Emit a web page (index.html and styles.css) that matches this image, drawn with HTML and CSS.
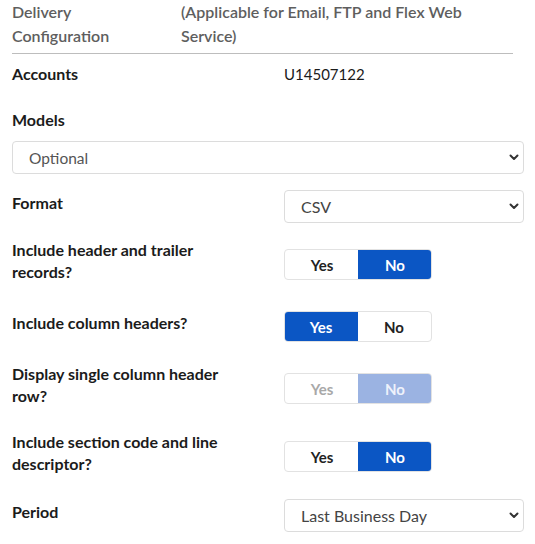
FILE: index.html
```html
<!DOCTYPE html>
<html>
<head>
<meta charset="utf-8">
<link rel="stylesheet" href="styles.css">
</head>
<body>
<div class="page">
  <div class="head">
    <div class="head-title">Delivery<br>Configuration</div>
    <div class="head-note">(Applicable for Email, FTP and Flex Web Service)</div>
  </div>

  <div class="row accounts">
    <div class="label">Accounts</div>
    <div class="value">U14507122</div>
  </div>

  <div class="models">
    <div class="label">Models</div>
    <div class="select full">
      <span class="placeholder">Optional</span>
      <svg class="chev" width="10" height="7" viewBox="0 0 10 7"><path d="M1.5 1.5 L5 5 L8.5 1.5" fill="none" stroke="#333" stroke-width="2" stroke-linecap="round" stroke-linejoin="round"/></svg>
    </div>
  </div>

  <div class="row ctl format">
    <div class="label">Format</div>
    <div class="select">
      <span>CSV</span>
      <svg class="chev" width="10" height="7" viewBox="0 0 10 7"><path d="M1.5 1.5 L5 5 L8.5 1.5" fill="none" stroke="#333" stroke-width="2" stroke-linecap="round" stroke-linejoin="round"/></svg>
    </div>
  </div>

  <div class="row ctl r1">
    <div class="label">Include header and trailer<br>records?</div>
    <div class="toggle"><span class="opt">Yes</span><span class="opt on">No</span></div>
  </div>

  <div class="row ctl r2">
    <div class="label">Include column headers?</div>
    <div class="toggle"><span class="opt on">Yes</span><span class="opt">No</span></div>
  </div>

  <div class="row ctl r3">
    <div class="label">Display single column header<br>row?</div>
    <div class="toggle disabled"><span class="opt">Yes</span><span class="opt on">No</span></div>
  </div>

  <div class="row ctl r4">
    <div class="label">Include section code and line<br>descriptor?</div>
    <div class="toggle"><span class="opt">Yes</span><span class="opt on">No</span></div>
  </div>

  <div class="row ctl period">
    <div class="label">Period</div>
    <div class="select">
      <span>Last Business Day</span>
      <svg class="chev" width="10" height="7" viewBox="0 0 10 7"><path d="M1.5 1.5 L5 5 L8.5 1.5" fill="none" stroke="#333" stroke-width="2" stroke-linecap="round" stroke-linejoin="round"/></svg>
    </div>
  </div>
</div>
</body>
</html>
```

FILE: styles.css
```css
html, body {
  margin: 0;
  padding: 0;
  background: #fff;
}
body {
  font-family: Lato, "Open Sans", Arial, sans-serif;
  font-size: 16px;
  color: #1b1b1b;
}
.page {
  width: 512px;
  padding: 0 11px 0 12px;
}
.head {
  display: grid;
  grid-template-columns: 169px 1fr;
  line-height: 24px;
  color: #5e5e5e;
  font-weight: 600;
  padding-bottom: 5px;
  border-bottom: 1px solid #bdbdbd;
  margin-right: 11px;
}
.head-note {
  padding-right: 50px;
}
.row {
  display: grid;
  grid-template-columns: 272px 240px;
}
.label {
  font-weight: 700;
  line-height: 22px;
}
.accounts {
  margin-top: 9px;
  line-height: 22px;
}
.value {
  font-weight: 400;
  font-size: 15px;
}
.models {
  margin-top: 24px;
}
.models .select {
  margin-top: 10px;
}
.ctl {
  align-items: center;
}
.ctl .label {
  padding-bottom: 7px;
}
.select {
  box-sizing: border-box;
  height: 33px;
  border: 1px solid #dcdcdc;
  border-radius: 4px;
  display: flex;
  align-items: center;
  justify-content: space-between;
  padding: 0 4px 0 16px;
  color: #444;
  font-weight: 400;
}
.select .placeholder {
  color: #555;
  font-size: 15.5px;
}
.chev {
  display: block;
}
.format { margin-top: 16px; }
.r1 { margin-top: 16px; }
.r2 { margin-top: 21px; }
.r3 { margin-top: 21px; }
.r4 { margin-top: 17px; }
.period { margin-top: 17px; }

.toggle {
  display: flex;
  width: 148px;
  height: 31px;
  box-sizing: border-box;
  border: 1px solid #e2e2e2;
  border-radius: 4px;
  overflow: hidden;
}
.opt {
  flex: 1;
  display: flex;
  align-items: center;
  justify-content: center;
  font-weight: 700;
  font-size: 15px;
  color: #222;
}
.opt.on {
  background: #0b56c4;
  color: #fff;
  margin: -1px;
}
.toggle.disabled .opt {
  color: #a8a8a8;
}
.toggle.disabled .opt.on {
  background: #9bb3e2;
  color: #eef2fb;
}
```
